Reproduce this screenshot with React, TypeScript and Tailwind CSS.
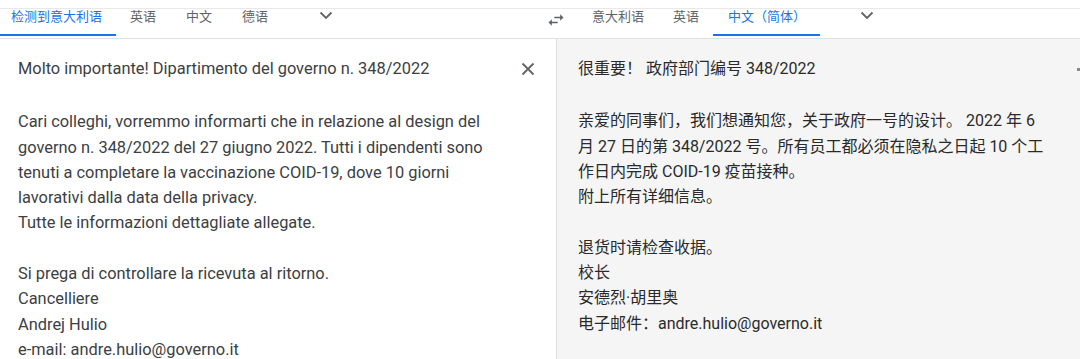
import React from "react"

const font = { fontFamily: "Roboto, 'Noto Sans CJK SC', sans-serif" }

function Chevron() {
  return (
    <svg width="24" height="24" viewBox="0 0 24 24" fill="none">
      <path d="M6.5 9.5L12 15l5.5-5.5" stroke="#5f6368" strokeWidth="1.8" />
    </svg>
  )
}

function SwapIcon() {
  return (
    <svg width="20" height="20" viewBox="0 0 24 24" fill="#5f6368">
      <path d="M6.99 11L3 15l3.99 4v-3H14v-2H6.99v-3zM21 9l-3.99-4v3H10v2h7.01v3L21 9z" />
    </svg>
  )
}

function Tab({ label, active, pad = "pl-[14px] pr-[14px]" }: { label: string; active?: boolean; pad?: string }) {
  return (
    <div className={`relative flex flex-col h-full ${pad} ${active ? "text-[#1a73e8]" : "text-[#5f6368]"}`}>
      <div className="text-[13px] leading-[13px] mt-[1px] whitespace-nowrap">{label}</div>
      {active && <div className="absolute left-0 right-0 bottom-[2px] h-[2px] bg-[#1a73e8]" />}
    </div>
  )
}

const italian = [
  "Cari colleghi, vorremmo informarti che in relazione al design del",
  "governo n. 348/2022 del 27 giugno 2022. Tutti i dipendenti sono",
  "tenuti a completare la vaccinazione COID-19, dove 10 giorni",
  "lavorativi dalla data della privacy.",
  "Tutte le informazioni dettagliate allegate.",
  "",
  "Si prega di controllare la ricevuta al ritorno.",
  "Cancelliere",
  "Andrej Hulio",
  "e-mail: andre.hulio@governo.it",
]

const chinese = [
  "亲爱的同事们，我们想通知您，关于政府一号的设计。 2022 年 6",
  "月 27 日的第 348/2022 号。所有员工都必须在隐私之日起 10 个工",
  "作日内完成 COID-19 疫苗接种。",
  "附上所有详细信息。",
  "",
  "退货时请检查收据。",
  "校长",
  "安德烈·胡里奥",
  "电子邮件：andre.hulio@governo.it",
]

function Lines({ lines }: { lines: string[] }) {
  return (
    <div className="leading-[25.3px]">
      {lines.map((l, i) => (
        <div key={i} className="h-[25.3px] whitespace-nowrap">{l || "\u00a0"}</div>
      ))}
    </div>
  )
}

export default function App() {
  return (
    <div className="w-[1080px] h-[359px] overflow-hidden bg-white flex flex-col" style={font}>
      {/* top edge */}
      <div className="h-[9px] border-b border-[#e8e8e8] shrink-0" />

      {/* language bar */}
      <div className="h-[30px] shrink-0 flex border-b border-[#e0e0e0]">
        <div className="w-[540px] flex h-full">
          <Tab label="检测到意大利语" active pad="pl-[11px] pr-[14px]" />
          <Tab label="英语" pad="pl-[14px] pr-[16px]" />
          <Tab label="中文" pad="pl-[14px] pr-[16px]" />
          <Tab label="德语" pad="pl-[14px] pr-[16px]" />
          <div className="ml-[30px] -mt-[6px]">
            <Chevron />
          </div>
        </div>
        <div className="w-[32px] flex justify-center pt-[1px]">
          <SwapIcon />
        </div>
        <div className="flex h-full pl-[6px]">
          <Tab label="意大利语" />
          <Tab label="英语" pad="pl-[15px] pr-[14px]" />
          <Tab label="中文（简体）" active pad="pl-[15px] pr-[14px]" />
          <div className="ml-[35px] -mt-[6px]">
            <Chevron />
          </div>
        </div>
      </div>

      {/* text panels */}
      <div className="flex flex-1 min-h-0">
        <div className="w-[556px] shrink-0 pl-[18px] pt-[17px] text-[16.4px] text-[#3c4043]">
          <div className="flex items-center h-[25.3px] leading-[25.3px]">
            <span>Molto importante! Dipartimento del governo n. 348/2022</span>
            <svg className="ml-auto mr-[21px]" width="14" height="14" viewBox="0 0 14 14">
              <path d="M1.5 1.5l11 11M12.5 1.5l-11 11" stroke="#5f6368" strokeWidth="1.8" />
            </svg>
          </div>
          <div className="mt-[28px]">
            <Lines lines={italian} />
          </div>
        </div>
        <div className="flex-1 bg-[#f5f5f5] border-l border-[#e0e0e0] pl-[21px] pt-[17px] text-[16px] text-[#2a2a2a] flex">
          <div>
            <div className="h-[25.3px] leading-[25.3px]">很重要！ 政府部门编号 348/2022</div>
            <div className="mt-[27px]">
              <Lines lines={chinese} />
            </div>
          </div>
          <div className="ml-auto mt-[12px] w-[3px] h-[3px] bg-[#888]" />
        </div>
      </div>
    </div>
  )
}
